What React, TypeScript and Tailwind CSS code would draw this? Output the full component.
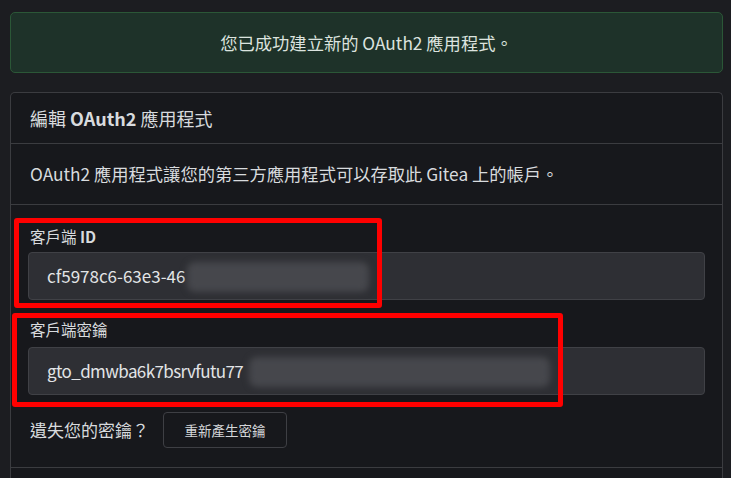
import React from "react";

export default function App() {
  return (
    <div className="relative min-h-screen bg-[#1c1d21] pt-[12px] pl-[10px] pr-[8px] font-['Noto_Sans_CJK_TC','Noto_Sans',sans-serif] text-[#d8dbde] overflow-hidden">
      <div className="h-[61px] rounded-[5px] border border-[#2b5737] bg-[#1e3229] flex items-center justify-center text-[17.3px] text-[#dce3df]">
        您已成功建立新的 OAuth2 應用程式。
      </div>

      <div className="mt-[19px] rounded-t-[5px] border border-b-0 border-[#3b3c40] bg-[#17181c]">
        <div className="h-[51px] px-[19px] flex items-center border-b border-[#3b3c40] text-[18px]">
          編輯&nbsp;<span className="font-bold">OAuth2</span>&nbsp;應用程式
        </div>
        <div className="h-[61px] px-[19px] flex items-center border-b border-[#3b3c40] text-[17.3px]">
          OAuth2 應用程式讓您的第三方應用程式可以存取此 Gitea 上的帳戶。
        </div>
        <div className="px-[17px] pt-[21px] pb-[19px] border-b border-[#3b3c40]">
          <div className="pl-[2px] h-[20px] leading-[20px] text-[15.5px]">
            客戶端 <span className="font-bold">ID</span>
          </div>
          <div className="relative mt-[6px] h-[48px] rounded-[4px] border border-[#404146] bg-[#2e2f34] flex items-center pl-[18px] text-[17px] text-[#e2e4e6]">
            cf5978c6-63e3-46
            <div className="absolute left-[158px] top-[9px] w-[182px] h-[30px] bg-[#46474c] blur-[3px] rounded-[8px]" />
          </div>
          <div className="pl-[2px] mt-[19px] h-[20px] leading-[20px] text-[15.5px]">客戶端密鑰</div>
          <div className="relative mt-[8px] h-[48px] rounded-[4px] border border-[#404146] bg-[#2e2f34] flex items-center pl-[18px] text-[17px] tracking-[-0.6px] text-[#e2e4e6]">
            gto_dmwba6k7bsrvfutu77
            <div className="absolute left-[220px] top-[9px] w-[301px] h-[30px] bg-[#46474c] blur-[3px] rounded-[8px]" />
          </div>
          <div className="mt-[17px] flex items-center gap-[14px] pl-[2px]">
            <span className="text-[17px]">遺失您的密鑰？</span>
            <button className="h-[36px] w-[124px] rounded-[4px] border border-[#3e3f44] bg-[#17181c] text-[13.5px] text-[#d4d6d9]">
              重新產生密鑰
            </button>
          </div>
        </div>
        <div className="h-[20px]" />
      </div>

      <div className="absolute left-[14px] top-[218px] w-[368px] h-[90px] border-[5px] border-[#ff0000] rounded-[3px] pointer-events-none" />
      <div className="absolute left-[12px] top-[313px] w-[551px] h-[94px] border-[5px] border-[#ff0000] rounded-[3px] pointer-events-none" />
    </div>
  );
}
